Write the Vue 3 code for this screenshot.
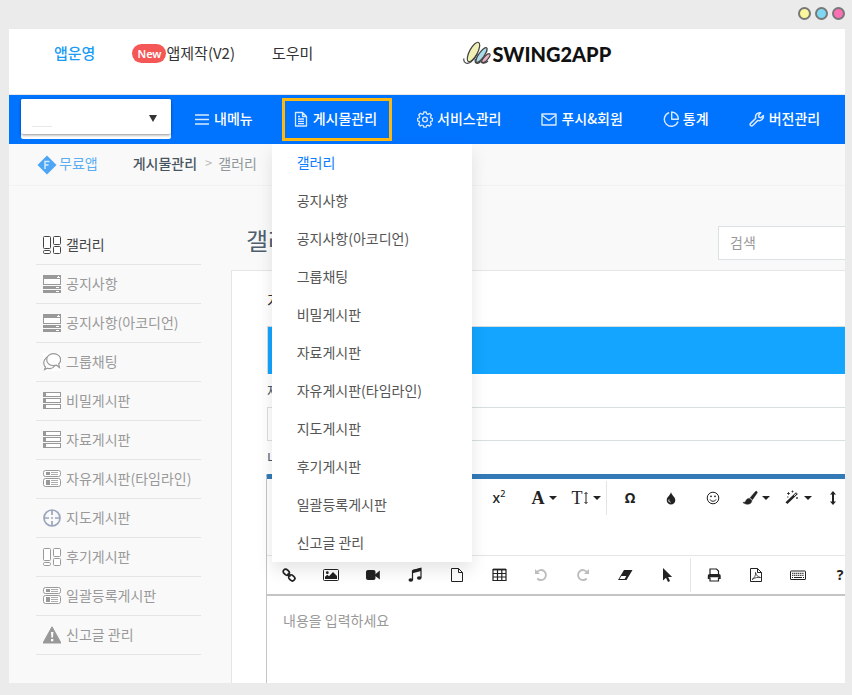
<script setup>
const mainMenu = [
  { label: '내메뉴', icon: 'menu' },
  { label: '게시물관리', icon: 'doc', open: true },
  { label: '서비스관리', icon: 'gear' },
  { label: '푸시&회원', icon: 'mail' },
  { label: '통계', icon: 'pie' },
  { label: '버전관리', icon: 'wrench' },
]

const boards = [
  { label: '갤러리', icon: 'gallery', active: true },
  { label: '공지사항', icon: 'notice' },
  { label: '공지사항(아코디언)', icon: 'notice' },
  { label: '그룹채팅', icon: 'chat' },
  { label: '비밀게시판', icon: 'rows' },
  { label: '자료게시판', icon: 'rows' },
  { label: '자유게시판(타임라인)', icon: 'timeline' },
  { label: '지도게시판', icon: 'target' },
  { label: '후기게시판', icon: 'gallery' },
  { label: '일괄등록게시판', icon: 'timeline' },
  { label: '신고글 관리', icon: 'warn' },
]

const rowOne = [
  { name: '위첨자', glyph: 'x', sup: '2' },
  { name: '글꼴', glyph: 'A', kind: 'serif', caret: true },
  { name: '글자 크기', glyph: 'T', kind: 'serif thin', icon: 'height', caret: true },
  { sep: true },
  { name: '특수문자', glyph: 'Ω', kind: 'bold' },
  { name: '색상', icon: 'drop' },
  { name: '이모티콘', icon: 'smile' },
  { name: '인라인 스타일', icon: 'brush', caret: true },
  { name: '문단 스타일', icon: 'wand', caret: true },
  { name: '줄 간격', icon: 'updown', caret: true },
]

const rowTwo = [
  { name: '링크', icon: 'link' },
  { name: '이미지', icon: 'image' },
  { name: '동영상', icon: 'video' },
  { name: '음악', icon: 'music' },
  { name: '파일', icon: 'file' },
  { name: '표', icon: 'table' },
  { name: '실행 취소', icon: 'undo', off: true },
  { name: '다시 실행', icon: 'redo', off: true },
  { name: '서식 지우기', icon: 'eraser' },
  { name: '전체 선택', icon: 'cursor' },
  { sep: true },
  { name: '인쇄', icon: 'print' },
  { name: 'PDF', icon: 'pdf' },
  { name: '단축키', icon: 'keyboard' },
  { name: '도움말', glyph: '?', kind: 'bold' },
]

const icons = {
  menu: '<path d="M1 4h14M1 8.500h14M1 13h14" fill="none" stroke="currentColor" stroke-width="1.400"/>',
  doc: '<path d="M2.500 1.500h7l4 4v9.500h-11zM9.500 1.500v4h4M5 8h6M5 10.300h6M5 12.600h6M5 5.500h2" fill="none" stroke="currentColor" stroke-width="1.300" stroke-linejoin="round"/>',
  gear: '<g fill="none" stroke="currentColor" stroke-width="1.300" stroke-linejoin="round"><path d="M6.800 1h2.400l.5 1.900 1.300.5 1.700-1 1.700 1.700-1 1.700.5 1.300 1.600.5v2.300l-1.700.5-.5 1.300 1 1.700-1.700 1.700-1.700-1-1.300.5-.5 1.600H6.800l-.5-1.700-1.300-.5-1.700 1-1.700-1.700 1-1.700-.5-1.300-1.600-.5V7.500l1.700-.5.5-1.300-1-1.700 1.700-1.700 1.700 1 1.300-.5z"/><circle cx="8" cy="8.500" r="2.400"/></g>',
  mail: '<path d="M1 3h14v11H1zM1.500 4.500 8 9.500l6.500-5" fill="none" stroke="currentColor" stroke-width="1.400" stroke-linejoin="round"/>',
  pie: '<path d="M6.500 1.700A6.900 6.900 0 1 0 14.700 10H8z" fill="none" stroke="none"/><path d="M6.200 1.600A7 7 0 1 0 15 10.500M8.700 1v7.300H15.300A6.900 6.900 0 0 0 8.700 1z" fill="none" stroke="currentColor" stroke-width="1.400" stroke-linejoin="round"/>',
  wrench: '<path d="M14.300 4.500 12 6.700l-2-.5-.5-2 2.200-2.400A4.200 4.200 0 0 0 6.800 7.300L1.600 12.400a1.500 1.500 0 0 0 0 2.100 1.500 1.500 0 0 0 2.100 0l5.200-5.100a4.200 4.200 0 0 0 5.400-4.900z" fill="none" stroke="currentColor" stroke-width="1.500" stroke-linejoin="round"/>',
  gallery: '<g fill="#fff" stroke="currentColor"><rect x=".5" y=".5" width="7" height="12" rx="1"/><rect x="10.500" y=".5" width="7" height="8" rx="1"/><rect x="10.500" y="10.500" width="7" height="7" rx="1"/><rect x=".5" y="14.500" width="7" height="3" rx="1.200"/></g>',
  notice: '<path d="M0 0h18v10H0zM0 11h18v3H0zM0 15h18v3H0z" fill="currentColor"/><path d="M1 4h16v5H1zM14 2h3v1h-3zM15 1h1v1h-1zM13 12h3v1h-3zM13 16h3v1h-3z" fill="#fff"/>',
  chat: '<path d="M0 0h18v18H0z" fill="#fff"/><g fill="#fff" stroke="currentColor" stroke-width="1.200"><path d="M6 3C2 4.500-.5 9 1.500 13l1 1-1 2.500 3-1.300c3 1 5.500.3 7-2.200z"/><path d="M10.500.7c-4 0-6.800 2.500-6.800 6s3 6 6.800 6l3-.5 3 2.300-.8-3.700c1.300-1 1.900-2.500 1.900-4.100 0-3.500-3.100-6-7.100-6z"/></g>',
  rows: '<path d="M0 0h18v5H0zM0 6h18v5H0zM0 12h18v5H0z" fill="currentColor"/><path d="M3 1h14v3H3zM3 7h14v3H3zM3 13h14v3H3z" fill="#fff"/>',
  timeline: '<g fill="#fff" stroke="currentColor"><rect x=".5" y=".5" width="17" height="6" rx="2"/><rect x=".5" y="8.500" width="17" height="8" rx="2"/></g><path d="M3 2h4v3H3zM3 10h4v5H3z" fill="currentColor"/><path d="M8 2.500h7M8 4.500h7M8 10.500h7M8 12.500h7M8 14.500h7" stroke="currentColor" stroke-width=".8"/>',
  target: '<g fill="none" stroke="#9aa5bd" stroke-width="1.700"><circle cx="9" cy="9" r="8"/><path d="M9 1v5M9 12v5M1 9h5M12 9h5"/></g><circle cx="9" cy="9" r="1" fill="#9aa5bd"/>',
  warn: '<path d="M9 .8 18 17H0z" fill="currentColor" stroke="currentColor" stroke-linejoin="round"/><path d="M8 6h2.400l-.4 5.500H8.400zM8 13h2.300v2.200H8z" fill="#fff"/>',
  height: '<path d="M8 2.500v11M6.500 4 8 2.500 9.500 4M6.500 12 8 13.500 9.500 12" fill="none" stroke="currentColor"/>',
  drop: '<path d="M7 2C6.300 5.500 2.700 7 2.700 10.200a4.300 4.300 0 0 0 8.600 0C11.300 7 7.700 5.500 7 2z" fill="currentColor"/><path d="M5 9.500c-.6 1.400.2 2.700 1.500 2.700" stroke="#fff" fill="none"/>',
  smile: '<g fill="none" stroke="currentColor"><circle cx="7" cy="8" r="5.800"/><path d="M4 9.500c1 2.300 5 2.300 6 0"/></g><circle cx="5" cy="6.300" r=".9" fill="currentColor"/><circle cx="9" cy="6.300" r=".9" fill="currentColor"/>',
  brush: '<path d="M14.800 1.500c.7.500.5 1.200.1 1.800l-4.500 6.400-2.200-2 5.200-6c.4-.5.900-.6 1.400-.2zM7.500 8.400l2.300 2.100c.2 3.500-4.800 5-8.600 2.300-.3-.6.600-.6 1.500-.6 1.600-.2.700-3.800 4.800-3.800z" fill="currentColor" stroke="currentColor" stroke-width=".6"/>',
  wand: '<path d="M1.500 12.300 12 2.200l1.800 1.700L3.400 14z" fill="currentColor"/><path d="M10 5.700 12.300 3.600" stroke="#fff"/><path d="M3 3.500h3M4.500 2v3M7.500 1.500h2M8.500.5v2M12 8h2M13 7v2M3 7h1.500" stroke="currentColor" stroke-width=".8"/>',
  updown: '<path d="M7 1 10 4.500H8v7h2L7 15l-3-3.500h2v-7H4z" fill="currentColor"/>',
  link: '<g fill="none" stroke="currentColor" stroke-width="1.700"><rect x="2" y="2.600" width="6.500" height="5" rx="2.500" transform="rotate(42 5.200 5.100)"/><rect x="7.500" y="8.400" width="6.500" height="5" rx="2.500" transform="rotate(42 10.800 10.900)"/><path d="m6.500 6.500 3 3"/></g>',
  image: '<rect x=".5" y="2.500" width="15" height="11" rx="1" fill="none" stroke="currentColor"/><circle cx="4.300" cy="5.700" r="1.400" fill="currentColor"/><path d="M2 12V9.800l2.300-2 1.700 1.500L10 5l4 4v3z" fill="currentColor"/>',
  video: '<rect x="1" y="3" width="9.500" height="10" rx="2" fill="currentColor"/><path d="m10 7.500 4.800-4v9L10 8.700z" fill="currentColor"/>',
  music: '<path d="M5.500 3.500 14 1.200v9.500M5.500 3.500v9.500" fill="none" stroke="currentColor" stroke-width="1.200"/><path d="m5.500 3 8.500-2v3L5.500 6.300z" fill="currentColor"/><ellipse cx="3.800" cy="13" rx="2.300" ry="1.700" fill="currentColor"/><ellipse cx="12.200" cy="11" rx="2.300" ry="1.700" fill="currentColor"/>',
  file: '<path d="M2.500 1.500h7l4 4v9h-11zM9.500 1.500v4h4" fill="none" stroke="currentColor" stroke-linejoin="round"/>',
  table: '<path d="M2 2.500h13v11H2zM2 6.500h13M2 10h13M6.500 2.500v11M10.800 2.500v11" fill="none" stroke="currentColor" stroke-width="1.200"/><path d="M2 2.500h13" stroke="currentColor" stroke-width="1.800"/>',
  undo: '<path d="M4 5a5 5 0 1 1 .3 6.500" fill="none" stroke="currentColor" stroke-width="1.900"/><path d="M2 2v5h5z" fill="currentColor"/>',
  redo: '<path d="M12 5a5 5 0 1 0-.3 6.500" fill="none" stroke="currentColor" stroke-width="1.900"/><path d="M14 2v5H9z" fill="currentColor"/>',
  eraser: '<path d="M7 3h8.500L9.500 13H1z" fill="currentColor"/><path d="M4.300 9h5L7.700 12H2.500z" fill="#fff"/>',
  cursor: '<path d="M4 1v12.500l3-2.800 2 4.300 2-.9-1.900-4.100h4z" fill="currentColor"/>',
  print: '<path d="M4 7V2h6.500L12.500 4v3M4 10.500V14h8.500v-3.500" fill="none" stroke="currentColor" stroke-width="1.200"/><path d="M3.500 7H13a1.700 1.700 0 0 1 1.700 1.700V12h-2v-1.700H3.800V12h-2V8.700A1.700 1.700 0 0 1 3.500 7z" fill="currentColor"/>',
  pdf: '<path d="M2.500 1.500h7l4 4v9h-11zM9.500 1.500v4h4" fill="none" stroke="currentColor"/><path d="M4 12.500C6.500 11 8 8 7.500 5.500c1 3 2 4.500 5 5C10 10 7 10.500 4 12.500z" fill="none" stroke="currentColor" stroke-width=".8"/>',
  keyboard: '<rect x=".5" y="4" width="15" height="8.500" rx=".5" fill="none" stroke="currentColor"/><path d="M2 6.300h12M2 8.300h12" stroke="currentColor" stroke-dasharray="1.400 .5"/><path d="M4 10.500h8M2 10.500h1M13 10.500h1" stroke="currentColor"/>',
}
</script>

<template>
  <div class="page">
    <div class="titlebar">
      <i class="dot yellow"></i><i class="dot blue"></i><i class="dot pink"></i>
    </div>

    <div class="window">
      <header class="header">
        <nav class="top-links">
          <a href="#" class="current">앱운영</a>
          <a href="#"><span class="badge">New</span>앱제작(V2)</a>
          <a href="#">도우미</a>
        </nav>
        <a href="#" class="logo">
          <svg width="29" height="24" viewBox="0 0 29 24" aria-hidden="true">
            <g stroke="#444" stroke-width="1.200">
              <ellipse cx="10.500" cy="11" rx="4" ry="10.800" transform="rotate(28 10.500 11)" fill="#f0f0b4" />
              <ellipse cx="18.500" cy="14" rx="2.700" ry="8.800" transform="rotate(35 18.500 14)" fill="#a9dbe8" />
              <ellipse cx="23" cy="17.200" rx="2" ry="5.600" transform="rotate(42 23 17.200)" fill="#eab2c4" />
              <path d="M.8 17.500c-.5 5 3.500 6 7 3.500 3-2.200 5-5 6.500-8M12.500 18c-1.500 5 2.500 5.500 5 2.500M18.500 19.500c-1 3.500 3.500 3.500 6.500.5" fill="none" />
            </g>
          </svg>
          <span>SWING2APP</span>
        </a>
      </header>

      <div class="navbar">
        <div class="picker">
          <select aria-label="앱 선택"><option value=""></option></select>
          <span class="picker-line"></span>
          <svg class="picker-caret" width="8" height="7" viewBox="0 0 8 7" aria-hidden="true"><path d="M0 0h8L4 7z" fill="#333" /></svg>
        </div>
        <nav class="menu">
          <div v-for="m in mainMenu" :key="m.label" class="menu-item" :class="{ open: m.open }">
            <a href="#" class="menu-link">
              <svg width="16" height="17" viewBox="0 0 16 17" aria-hidden="true" v-html="icons[m.icon]"></svg>
              <span>{{ m.label }}</span>
            </a>
            <div v-if="m.open" class="dropdown">
              <a v-for="b in boards" :key="b.label" href="#" :class="{ active: b.active }">{{ b.label }}</a>
            </div>
          </div>
        </nav>
      </div>

      <div class="crumbs">
        <a href="#" class="plan">
          <svg width="20" height="20" viewBox="0 0 20 20" aria-hidden="true">
            <path d="M10 .5 19.500 10 10 19.500.5 10z" fill="#4da6f5" />
            <path d="M8 14V6.500h4.500M8 10h3.500" stroke="#d3eaff" stroke-width="1.500" fill="none" />
          </svg>
          <span>무료앱</span>
        </a>
        <a href="#" class="crumb-root">게시물관리</a>
        <span class="crumb-sep">&gt;</span>
        <span class="crumb-leaf">갤러리</span>
      </div>

      <div class="body">
        <aside class="side">
          <a v-for="b in boards" :key="b.label" href="#" :class="{ active: b.active }">
            <svg width="18" height="18" viewBox="0 0 18 18" aria-hidden="true" v-html="icons[b.icon]"></svg>
            <span>{{ b.label }}</span>
          </a>
        </aside>

        <main class="main">
          <div class="title-row">
            <h1>갤러리</h1>
            <input type="search" class="search" placeholder="검색" aria-label="검색" />
          </div>
          <section class="card">
            <h2>게시</h2>
            <div class="banner"></div>
            <label class="label" for="post-title">제목</label>
            <input id="post-title" class="field" type="text" />
            <label class="label" for="post-body">내용</label>
            <div class="editor">
              <div class="tool-row tall">
                <template v-for="(t, i) in rowOne" :key="i">
                  <span v-if="t.sep" class="sep"></span>
                  <button v-else type="button" :aria-label="t.name" :class="t.kind">
                    <span v-if="t.glyph">{{ t.glyph }}<sup v-if="t.sup">{{ t.sup }}</sup></span>
                    <svg v-if="t.icon" :class="t.icon" width="16" height="16" viewBox="0 0 16 16" aria-hidden="true" v-html="icons[t.icon]"></svg>
                    <i v-if="t.caret" class="caret"></i>
                  </button>
                </template>
              </div>
              <div class="tool-row second">
                <template v-for="(t, i) in rowTwo" :key="i">
                  <span v-if="t.sep" class="sep"></span>
                  <button v-else type="button" :aria-label="t.name" :class="t.kind" :disabled="t.off">
                    <span v-if="t.glyph">{{ t.glyph }}</span>
                    <svg v-if="t.icon" width="16" height="16" viewBox="0 0 16 16" aria-hidden="true" v-html="icons[t.icon]"></svg>
                  </button>
                </template>
              </div>
              <textarea id="post-body" placeholder="내용을 입력하세요"></textarea>
            </div>
          </section>
        </main>
      </div>
    </div>
  </div>
</template>

<style>
body {
  background: #ebebeb;
}
</style>

<style scoped>
* {
  box-sizing: border-box;
}
.page {
  display: flex;
  flex-direction: column;
  height: 100vh;
  padding: 0 7px 12px 9px;
  font-family: "Noto Sans CJK KR", "Noto Sans", sans-serif;
  font-size: 14px;
  line-height: 20px;
  white-space: nowrap;
}
a {
  color: inherit;
  text-decoration: none;
}
svg {
  flex: none;
  display: block;
}
.titlebar {
  display: flex;
  flex: none;
  justify-content: flex-end;
  gap: 4px;
  height: 29px;
  padding-top: 7px;
}
.dot {
  width: 13px;
  height: 13px;
  border: 2px solid #777;
  border-radius: 50%;
}
.yellow { background: #fbf59b; }
.blue { background: #7fd8f3; }
.pink { background: #fc6fb5; }

.window {
  display: flex;
  flex: 1;
  flex-direction: column;
  min-height: 0;
  overflow: hidden;
  background: #f9f9f9;
}
.header {
  display: flex;
  flex: none;
  align-items: flex-start;
  height: 66px;
  padding: 11px 0 0 45px;
  background: #fff;
  border-bottom: 1px solid #e8e8e8;
}
.top-links {
  display: flex;
  gap: 37px;
  padding-top: 3px;
  font-size: 15px;
  color: #333;
}
.top-links a {
  display: flex;
  align-items: center;
}
.top-links .current {
  color: #1a9cf5;
  font-weight: 500;
}
.badge {
  padding: 0 5px;
  border-radius: 10px;
  background: #f55757;
  color: #fff;
  font: 600 11px/19px "Noto Sans", sans-serif;
}
.logo {
  display: flex;
  align-items: center;
  margin-left: 150px;
  color: #111;
  font: 900 20px/24px Lato, sans-serif;
}
.logo span {
  padding-top: 2px;
}
.navbar {
  display: flex;
  flex: none;
  height: 49px;
  padding-left: 12px;
  background: #0073ff;
}
.picker {
  position: relative;
  width: 150px;
  height: 40px;
  margin-top: 4px;
  background: #fff;
  border-radius: 2px;
}
.picker select {
  display: block;
  width: 100%;
  height: 35px;
  border: 0;
  border-radius: 2px;
  appearance: none;
  background: #fff;
  box-shadow: 0 1px 3px rgba(0, 0, 0, 0.45);
}
.picker-line {
  position: absolute;
  left: 11px;
  top: 27px;
  width: 20px;
  height: 1px;
  background: #e8e8e8;
}
.picker-caret {
  position: absolute;
  right: 14px;
  top: 16px;
}
.menu {
  display: flex;
  gap: 14px;
  padding: 3px 0 3px 12px;
  color: #fff;
  font-weight: 500;
}
.menu-item {
  position: relative;
  border: 3px solid transparent;
}
.menu-item.open {
  border-color: #fdb913;
}
.menu-link {
  display: flex;
  align-items: center;
  gap: 4px;
  height: 37px;
  padding: 0 12px 0 8px;
}
.menu-link svg {
  opacity: 0.85;
}
.menu-link span {
  padding-bottom: 3px;
}
.dropdown {
  position: absolute;
  z-index: 5;
  top: 43px;
  left: -13px;
  display: flex;
  flex-direction: column;
  width: 200px;
  background: #fff;
  box-shadow: 0 8px 16px rgba(0, 0, 0, 0.1);
  color: #555;
  font-weight: 400;
}
.dropdown a {
  padding: 8px 25px 10px;
}
.dropdown .active {
  color: #0a7cff;
}
.crumbs {
  display: flex;
  flex: none;
  align-items: center;
  height: 42px;
  padding: 0 0 4px 28px;
  border-bottom: 1px solid #f2f2f2;
}
.plan {
  display: flex;
  align-items: center;
  gap: 2px;
  margin-right: 35px;
  color: #5aaef3;
}
.plan svg {
  margin-top: 4px;
}
.crumb-root {
  color: #48555f;
  font-weight: 500;
}
.crumb-sep {
  margin: 0 6px 0 8px;
  color: #bbb;
  font-size: 13px;
}
.crumb-leaf {
  color: #8f9799;
}
.body {
  display: flex;
  flex: 1;
  min-height: 0;
  gap: 30px;
  padding: 40px 0 0 27px;
}
.side {
  flex: none;
  width: 165px;
  color: #999;
}
.side a {
  display: flex;
  align-items: center;
  gap: 5px;
  height: 39px;
  padding-left: 7px;
  border-bottom: 1px solid #e5e5e5;
}
.side span {
  padding-bottom: 2px;
}
.side .active {
  color: #444;
}
.main {
  display: flex;
  flex: 1;
  flex-direction: column;
  min-width: 0;
}
.title-row {
  display: flex;
  justify-content: space-between;
  align-items: center;
  height: 34px;
  margin-bottom: 10px;
  padding-left: 15px;
}
h1 {
  margin: 0;
  padding-bottom: 6px;
  color: #4f5f6f;
  font-size: 24px;
  font-weight: 400;
  line-height: 34px;
}
.search {
  width: 127px;
  height: 34px;
  padding: 0 11px 2px;
  border: 1px solid #dbe2e3;
  border-right: 0;
  border-radius: 0;
  appearance: none;
  background: #fff;
  font: inherit;
}
::placeholder {
  color: #999;
  opacity: 1;
}
.card {
  display: flex;
  flex: 1;
  flex-direction: column;
  min-height: 0;
  padding-left: 35px;
  border: solid #e5e5e5;
  border-width: 1px 0 0 1px;
  background: #fff;
}
h2 {
  margin: 17px 0 14px;
  color: #333;
  font-size: 16px;
  font-weight: 400;
  line-height: 24px;
}
.banner {
  flex: none;
  height: 48px;
  border: solid #d5dde0;
  border-width: 1px 0 0 1px;
  background: #13a5ff;
}
.label {
  padding: 6px 0 7px;
  color: #4a5a68;
}
.field {
  flex: none;
  width: 100%;
  height: 34px;
  border: 1px solid #d8dfe0;
  border-right: 0;
  font: inherit;
}
.editor {
  display: flex;
  flex: 1;
  flex-direction: column;
  min-height: 0;
  margin-left: -1px;
  overflow: hidden;
  border-left: 1px solid #c4c4c4;
  border-top: 5px solid #337ab7;
  border-top-left-radius: 2px;
}
.tool-row {
  display: flex;
  flex: none;
  align-items: flex-start;
  padding-left: 1px;
  color: #222;
}
.tall {
  height: 76px;
  padding-left: 211px;
}
.second {
  height: 41px;
  border-top: 1px solid #e5e5e5;
  border-bottom: 2px solid #c4c4c4;
}
.tool-row button {
  display: flex;
  flex: none;
  align-items: center;
  justify-content: center;
  width: 38px;
  height: 38px;
  margin: 0 2px;
  padding: 0;
  border: 0;
  background: none;
  color: inherit;
  font: 500 14px/20px "Noto Sans", sans-serif;
}
.tool-row button:disabled {
  color: #bdbdbd;
}
.tool-row .bold {
  font-weight: 700;
}
.tool-row .serif {
  padding-left: 6px;
  font: 700 18px/20px "Liberation Serif", serif;
}
.tool-row .thin {
  font-weight: 400;
}
svg.height {
  margin: 0 -5px;
}
sup {
  font-size: 9px;
  line-height: 0;
}
.caret {
  flex: none;
  margin-left: 4px;
  border: 4px solid transparent;
  border-top-color: currentColor;
  border-bottom: 0;
}
.sep {
  flex: none;
  width: 1px;
  height: 34px;
  margin: 2px;
  background: #e5e5e5;
}
textarea {
  flex: 1;
  padding: 14px 16px;
  border: 0;
  resize: none;
  background: #fff;
  font: inherit;
}
</style>
